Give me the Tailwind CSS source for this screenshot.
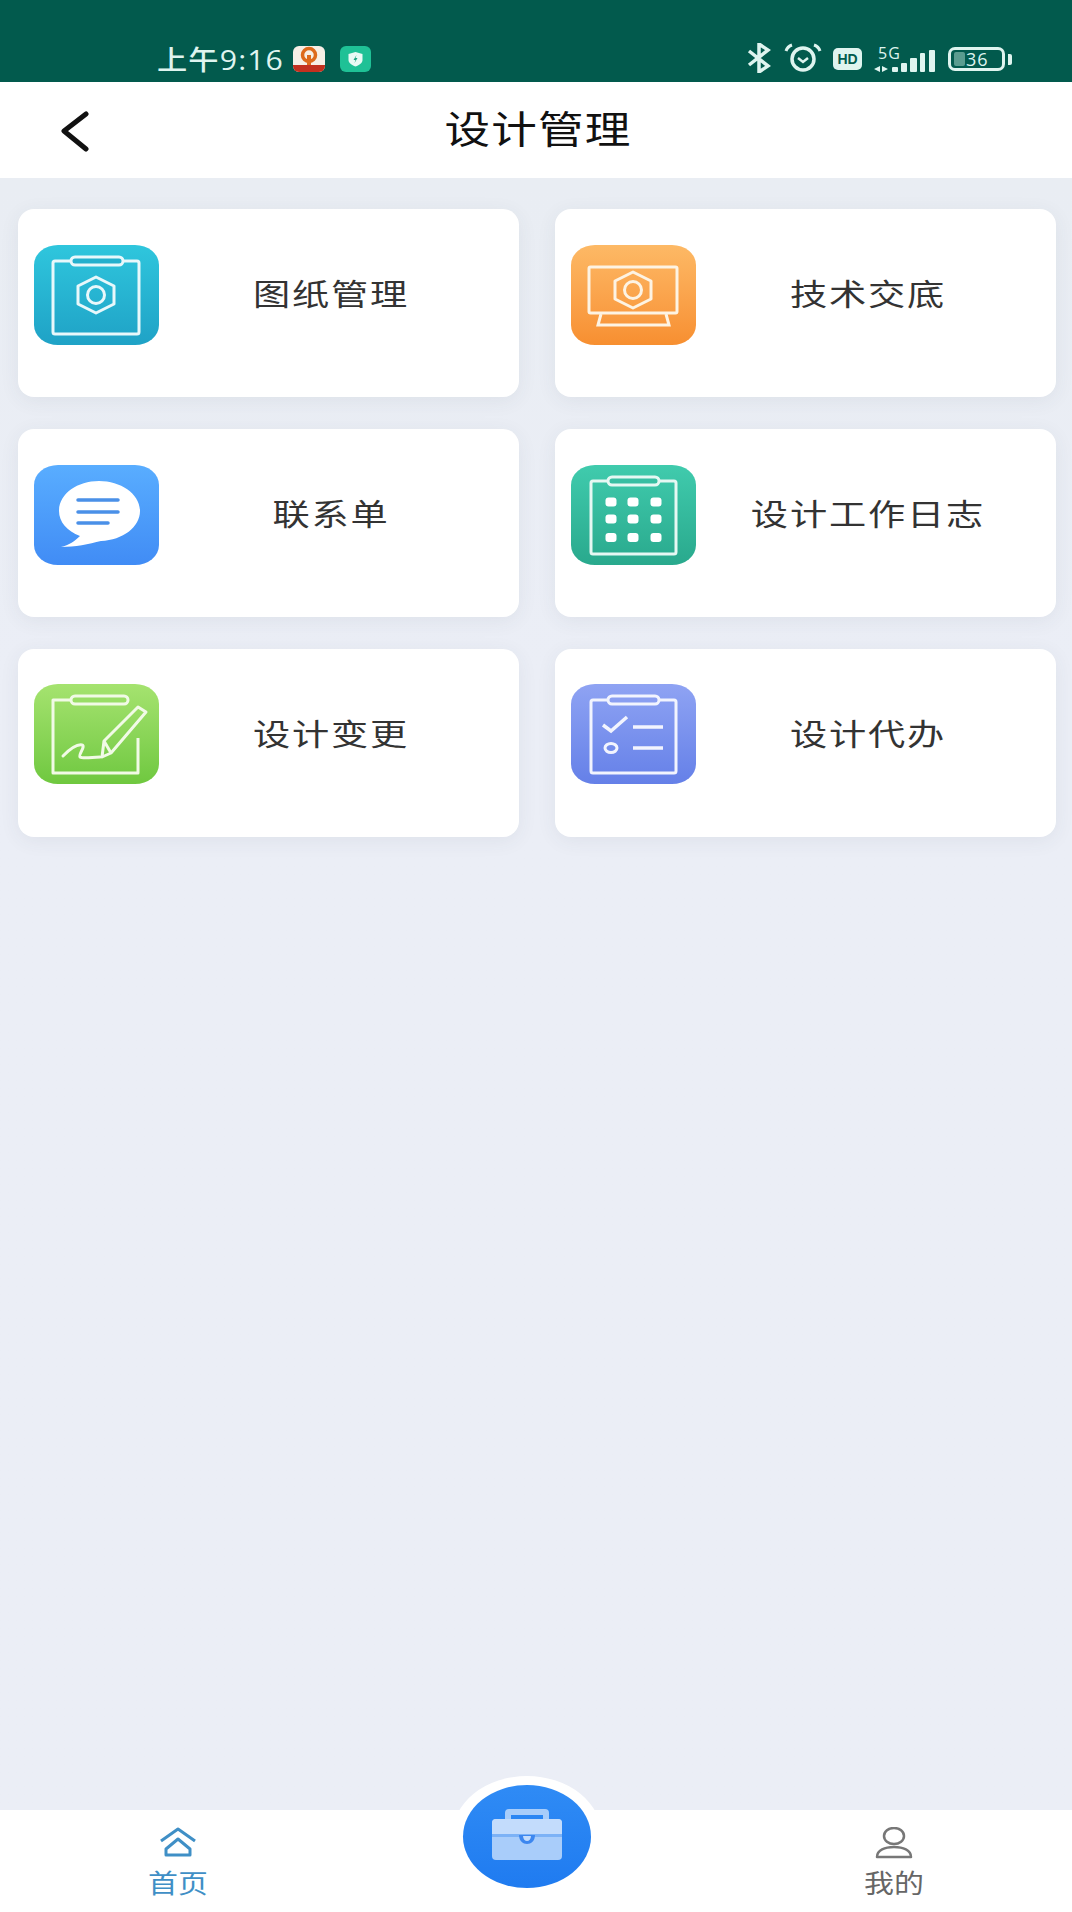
<!doctype html>
<html lang="zh-CN">
<head>
    <meta charset="UTF-8">
    <script src="https://cdn.jsdelivr.net/npm/@tailwindcss/browser@4"></script>
    <title>设计管理</title>
</head>
<body>
<div class="relative flex flex-col h-[1912px] w-[1072px] overflow-hidden bg-[#ebeef6] font-['Noto_Sans_CJK_SC','Noto_Sans',sans-serif]">
    <!-- status bar -->
    <div class="h-[82px] shrink-0 bg-[#025a4d] flex items-end pb-[9px] pl-[157px] pr-[60px] text-[#dff4ef]">
        <span class="text-[27px] leading-[28px] tracking-[1px] font-medium origin-left scale-x-[1.12] mb-[-1px] font-['Open_Sans','Noto_Sans_CJK_SC',sans-serif]">上午9:16</span>
        <svg class="ml-[23px] mb-[1px]" width="32" height="26" viewBox="0 0 32 26">
            <rect width="32" height="26" rx="6" fill="#f6efe6"/>
            <path d="M0 19h32v1a6 6 0 0 1-6 6H6a6 6 0 0 1-6-6z" fill="#c3301f"/>
            <circle cx="16" cy="9" r="6.500" fill="none" stroke="#dd6a1c" stroke-width="3.500"/>
            <path d="M14 9h4v10h-4z" fill="#dd6a1c"/>
        </svg>
        <svg class="ml-[15px] mb-[1px]" width="31" height="26" viewBox="0 0 31 26">
            <rect width="31" height="26" rx="6" fill="#1fc196"/>
            <path d="M15.500 6l7 2v6c0 3-3 5-7 6.500-4-1.500-7-3.500-7-6.500V8z" fill="#eafaf5"/>
            <path d="M16.500 9l-3 5h2l-1 3 3-5h-2z" fill="#1fa583"/>
        </svg>
        <div class="ml-auto flex items-end">
            <svg width="24" height="30" viewBox="0 0 24 30" fill="none" stroke="#dff4ef" stroke-width="3.500">
                <path d="M2 8l19 15-9 6V1l9 6L2 22"/>
            </svg>
            <svg class="ml-[13px] mb-[1px]" width="38" height="29" viewBox="0 0 38 29" fill="none" stroke="#dff4ef" stroke-width="3.500">
                <circle cx="19" cy="16" r="11"/>
                <path d="M14 15l5 4 5-4" stroke-width="2.500"/>
                <path d="M2 8c1-3 3-5 6-6M36 8c-1-3-3-5-6-6" stroke-width="3"/>
            </svg>
            <div class="ml-[11px] mb-[3px] w-[29px] h-[22px] rounded-[5px] bg-[#dff4ef] text-[#025a4d] text-[14px] leading-[22px] font-bold text-center font-['Liberation_Sans',sans-serif]">HD</div>
            <div class="ml-[11px] mb-[-1px] relative w-[64px] h-[28px]">
                <span class="absolute left-[5px] top-[-1px] text-[16px] leading-[16px] tracking-[1px] font-['Open_Sans',sans-serif]">5G</span>
                <svg class="absolute left-0 top-0" width="64" height="28" viewBox="0 0 64 28" fill="#dff4ef">
                    <path d="M1 23l6-3v6zM9 20l6 3-6 3z"/>
                    <rect x="19" y="21" width="6" height="5" rx="1"/>
                    <rect x="28" y="17" width="6" height="9" rx="1"/>
                    <rect x="37" y="12" width="7" height="14" rx="1"/>
                    <rect x="47" y="7" width="5" height="19" rx="1"/>
                    <rect x="56" y="4" width="6" height="22" rx="1"/>
                </svg>
            </div>
            <div class="ml-[11px] mb-[2px] relative flex items-center pl-[15px] w-[57px] h-[24px] rounded-[7px] border-[3px] border-[#dff4ef] text-[18px] leading-[18px] tracking-[1px] font-medium font-['Open_Sans',sans-serif]">
                <div class="absolute left-[3px] top-[2px] bottom-[2px] w-[11px] bg-[#5a9c8f] rounded-[2px]"></div>
                <span class="relative">36</span>
            </div>
            <div class="ml-[3px] mb-[8px] w-[4px] h-[11px] rounded-r-[2px] bg-[#dff4ef]"></div>
        </div>
    </div>

    <!-- title bar -->
    <div class="h-[96px] shrink-0 bg-white grid grid-cols-[1fr_auto_1fr] items-center">
        <svg class="ml-[60px] mt-[3px]" width="30" height="42" viewBox="0 0 30 42" fill="none" stroke="#111" stroke-width="5" stroke-linecap="round" stroke-linejoin="round">
            <path d="M26 3L4 20l22 18"/>
        </svg>
        <h1 class="text-[38px] leading-[48px] tracking-[1px] scale-x-[1.2] text-[#111] font-normal mb-[7px] mr-[-4px]">设计管理</h1>
    </div>

    <!-- menu -->
    <div class="flex-1 px-[18px] pt-[31px] bg-gradient-to-b from-[#e9edf3] from-0% to-[#ebeef6] to-[30%]">
        <div class="grid grid-cols-[501px_501px] gap-x-[36px] gap-y-[32px]">
            <div class="h-[188px] rounded-[16px] bg-white shadow-[0_4px_20px_rgba(60,70,90,0.07)] flex items-start pt-[36px] pl-[16px] pr-[16px]">
                <svg class="rounded-[24px/20px] bg-gradient-to-b from-[#2fc6dd] to-[#1fa2c6]" width="125" height="100" viewBox="0 0 125 100" fill="none" stroke="#e8f8fb" stroke-width="3">
                    <rect x="19" y="16" width="86" height="73" rx="2"/>
                    <rect x="37" y="12" width="52" height="8" rx="4" fill="#24b0cd"/>
                    <path d="M62 32l18 9v18l-18 9-18-9V41z" stroke-linejoin="round"/>
                    <circle cx="62" cy="50" r="8.500"/>
                </svg>
                <span class="flex-1 h-[100px] pb-[6px] flex items-center justify-center text-[30px] tracking-[1.500px] scale-x-[1.24] text-[#333]">图纸管理</span>
            </div>
            <div class="h-[188px] rounded-[16px] bg-white shadow-[0_4px_20px_rgba(60,70,90,0.07)] flex items-start pt-[36px] pl-[16px] pr-[16px]">
                <svg class="rounded-[24px/20px] bg-gradient-to-b from-[#fdb965] to-[#f78f30]" width="125" height="100" viewBox="0 0 125 100" fill="none" stroke="#fdf3e3" stroke-width="3">
                    <rect x="18" y="22" width="88" height="46" rx="1.500"/>
                    <path d="M30 69l-3 11h71l-3-11"/>
                    <path d="M62 27l18 9v18l-18 9-18-9V36z" stroke-linejoin="round"/>
                    <circle cx="62" cy="45" r="8.500"/>
                </svg>
                <span class="flex-1 h-[100px] pb-[6px] flex items-center justify-center text-[30px] tracking-[1.500px] scale-x-[1.24] text-[#333]">技术交底</span>
            </div>
            <div class="h-[188px] rounded-[16px] bg-white shadow-[0_4px_20px_rgba(60,70,90,0.07)] flex items-start pt-[36px] pl-[16px] pr-[16px]">
                <svg class="rounded-[24px/20px] bg-gradient-to-b from-[#59adff] to-[#418cf5]" width="125" height="100" viewBox="0 0 125 100">
                    <path d="M65 16c22 0 41 13 41 30 0 16-17 29-39 30-12 3-26 6-40 6 8-2 14-6 19-11C33 66 25 57 25 46c0-17 18-30 40-30z" fill="#fff"/>
                    <path d="M44 35h40M44 47h40M44 58h30" stroke="#4a90e8" stroke-width="3.500" stroke-linecap="round"/>
                </svg>
                <span class="flex-1 h-[100px] pb-[6px] flex items-center justify-center text-[30px] tracking-[1.500px] scale-x-[1.24] text-[#333]">联系单</span>
            </div>
            <div class="h-[188px] rounded-[16px] bg-white shadow-[0_4px_20px_rgba(60,70,90,0.07)] flex items-start pt-[36px] pl-[16px] pr-[16px]">
                <svg class="rounded-[24px/20px] bg-gradient-to-b from-[#40cbad] to-[#29a98d]" width="125" height="100" viewBox="0 0 125 100" fill="none" stroke="#e6f8f3" stroke-width="3">
                    <rect x="20" y="16" width="85" height="73" rx="2"/>
                    <rect x="37" y="12" width="51" height="8" rx="4" fill="#38bea2"/>
                    <g fill="#fff" stroke="none">
                        <rect x="34.500" y="32.500" width="11" height="9" rx="3"/><rect x="56.500" y="32.500" width="11" height="9" rx="3"/><rect x="79.500" y="32.500" width="11" height="9" rx="3"/>
                        <rect x="34.500" y="49.500" width="11" height="9" rx="3"/><rect x="56.500" y="49.500" width="11" height="9" rx="3"/><rect x="79.500" y="49.500" width="11" height="9" rx="3"/>
                        <rect x="34.500" y="68" width="11" height="9" rx="3"/><rect x="56.500" y="68" width="11" height="9" rx="3"/><rect x="79.500" y="68" width="11" height="9" rx="3"/>
                    </g>
                </svg>
                <span class="flex-1 h-[100px] pb-[6px] flex items-center justify-center text-[30px] tracking-[1.500px] scale-x-[1.24] text-[#333]">设计工作日志</span>
            </div>
            <div class="h-[188px] rounded-[16px] bg-white shadow-[0_4px_20px_rgba(60,70,90,0.07)] flex items-start pt-[35px] pl-[16px] pr-[16px]">
                <svg class="rounded-[24px/20px] bg-gradient-to-b from-[#a5e36f] to-[#6fc83f]" width="125" height="100" viewBox="0 0 125 100" fill="none" stroke="#f1fae6" stroke-width="3" stroke-linejoin="round">
                    <path d="M37 16H19v73h85V54"/>
                    <rect x="37" y="12" width="57" height="8" rx="4" fill="#99dd66"/>
                    <path d="M68 73l2-16 34-34 8 5-35 41z"/>
                    <path d="M70 57l7 12"/>
                    <path d="M29 72c6-6 14-12 19-11 4 1-4 10-2 12 3 2 13 0 20 0" stroke-linecap="round"/>
                </svg>
                <span class="flex-1 h-[100px] pb-[4px] flex items-center justify-center text-[30px] tracking-[1.500px] scale-x-[1.24] text-[#333]">设计变更</span>
            </div>
            <div class="h-[188px] rounded-[16px] bg-white shadow-[0_4px_20px_rgba(60,70,90,0.07)] flex items-start pt-[35px] pl-[16px] pr-[16px]">
                <svg class="rounded-[24px/20px] bg-gradient-to-b from-[#8fa3f3] to-[#6580e8]" width="125" height="100" viewBox="0 0 125 100" fill="none" stroke="#f2f4fe" stroke-width="3">
                    <rect x="20" y="16" width="85" height="73" rx="2"/>
                    <rect x="37" y="12" width="51" height="8" rx="4" fill="#8a9ef1"/>
                    <path d="M32 41l8 6 16-14" stroke-width="3.500"/>
                    <path d="M62 43h30M62 64h30" stroke-width="3.500"/>
                    <ellipse cx="40" cy="64" rx="6" ry="4.500" stroke-width="3"/>
                </svg>
                <span class="flex-1 h-[100px] pb-[4px] flex items-center justify-center text-[30px] tracking-[1.500px] scale-x-[1.24] text-[#333]">设计代办</span>
            </div>
        </div>
    </div>

    <!-- bottom tabs -->
    <div class="h-[102px] shrink-0 bg-white grid grid-cols-[356px_1fr_356px]">
        <div class="flex flex-col items-center pt-[17px]">
            <svg width="38" height="30" viewBox="0 0 38 30" fill="none" stroke="#3f8fc6" stroke-width="3" stroke-linejoin="round">
                <path d="M2 14L19 2l17 12"/>
                <path d="M7 28v-6L19 12l12 10v6z"/>
            </svg>
            <span class="mt-[10px] text-[26px] leading-[30px] scale-x-[1.15] text-[#3f8fc6]">首页</span>
        </div>
        <div></div>
        <div class="flex flex-col items-center pt-[17px]">
            <svg width="38" height="32" viewBox="0 0 38 32" fill="none" stroke="#777" stroke-width="2.500">
                <ellipse cx="19" cy="9" rx="10" ry="8"/>
                <path d="M2 30c0-7 8-10 17-10s17 3 17 10z" stroke-linejoin="round"/>
            </svg>
            <span class="mt-[8px] text-[26px] leading-[30px] scale-x-[1.15] text-[#666]">我的</span>
        </div>
    </div>

    <!-- centre button, sits over the tab bar -->
    <div class="absolute left-[452px] top-[1776px] w-[150px] h-[120px] rounded-[50%] bg-white flex items-center justify-center">
        <div class="w-[128px] h-[103px] rounded-[50%] bg-gradient-to-b from-[#2f8bf5] to-[#1f7bf0] flex items-center justify-center">
            <svg width="72" height="54" viewBox="0 0 72 54">
                <path d="M14 10V4a4 4 0 0 1 4-4h36a4 4 0 0 1 4 4v6h-6V6H20v4z" fill="#a8cdfa"/>
                <rect x="1" y="10" width="70" height="41" rx="4" fill="#a9cdfa"/>
                <path d="M1 14a4 4 0 0 1 4-4h62a4 4 0 0 1 4 4v12H1z" fill="#c3dcfc"/>
                <path d="M1 25h70v3H1z" fill="#7cb2f6"/>
                <path d="M28 26h16c0 6-4 9-8 9s-8-3-8-9z" fill="#3d87ef"/>
                <path d="M32 27h8c0 3-2 5-4 5s-4-2-4-5z" fill="#c3dcfc"/>
            </svg>
        </div>
    </div>
</div>
</body>
</html>
